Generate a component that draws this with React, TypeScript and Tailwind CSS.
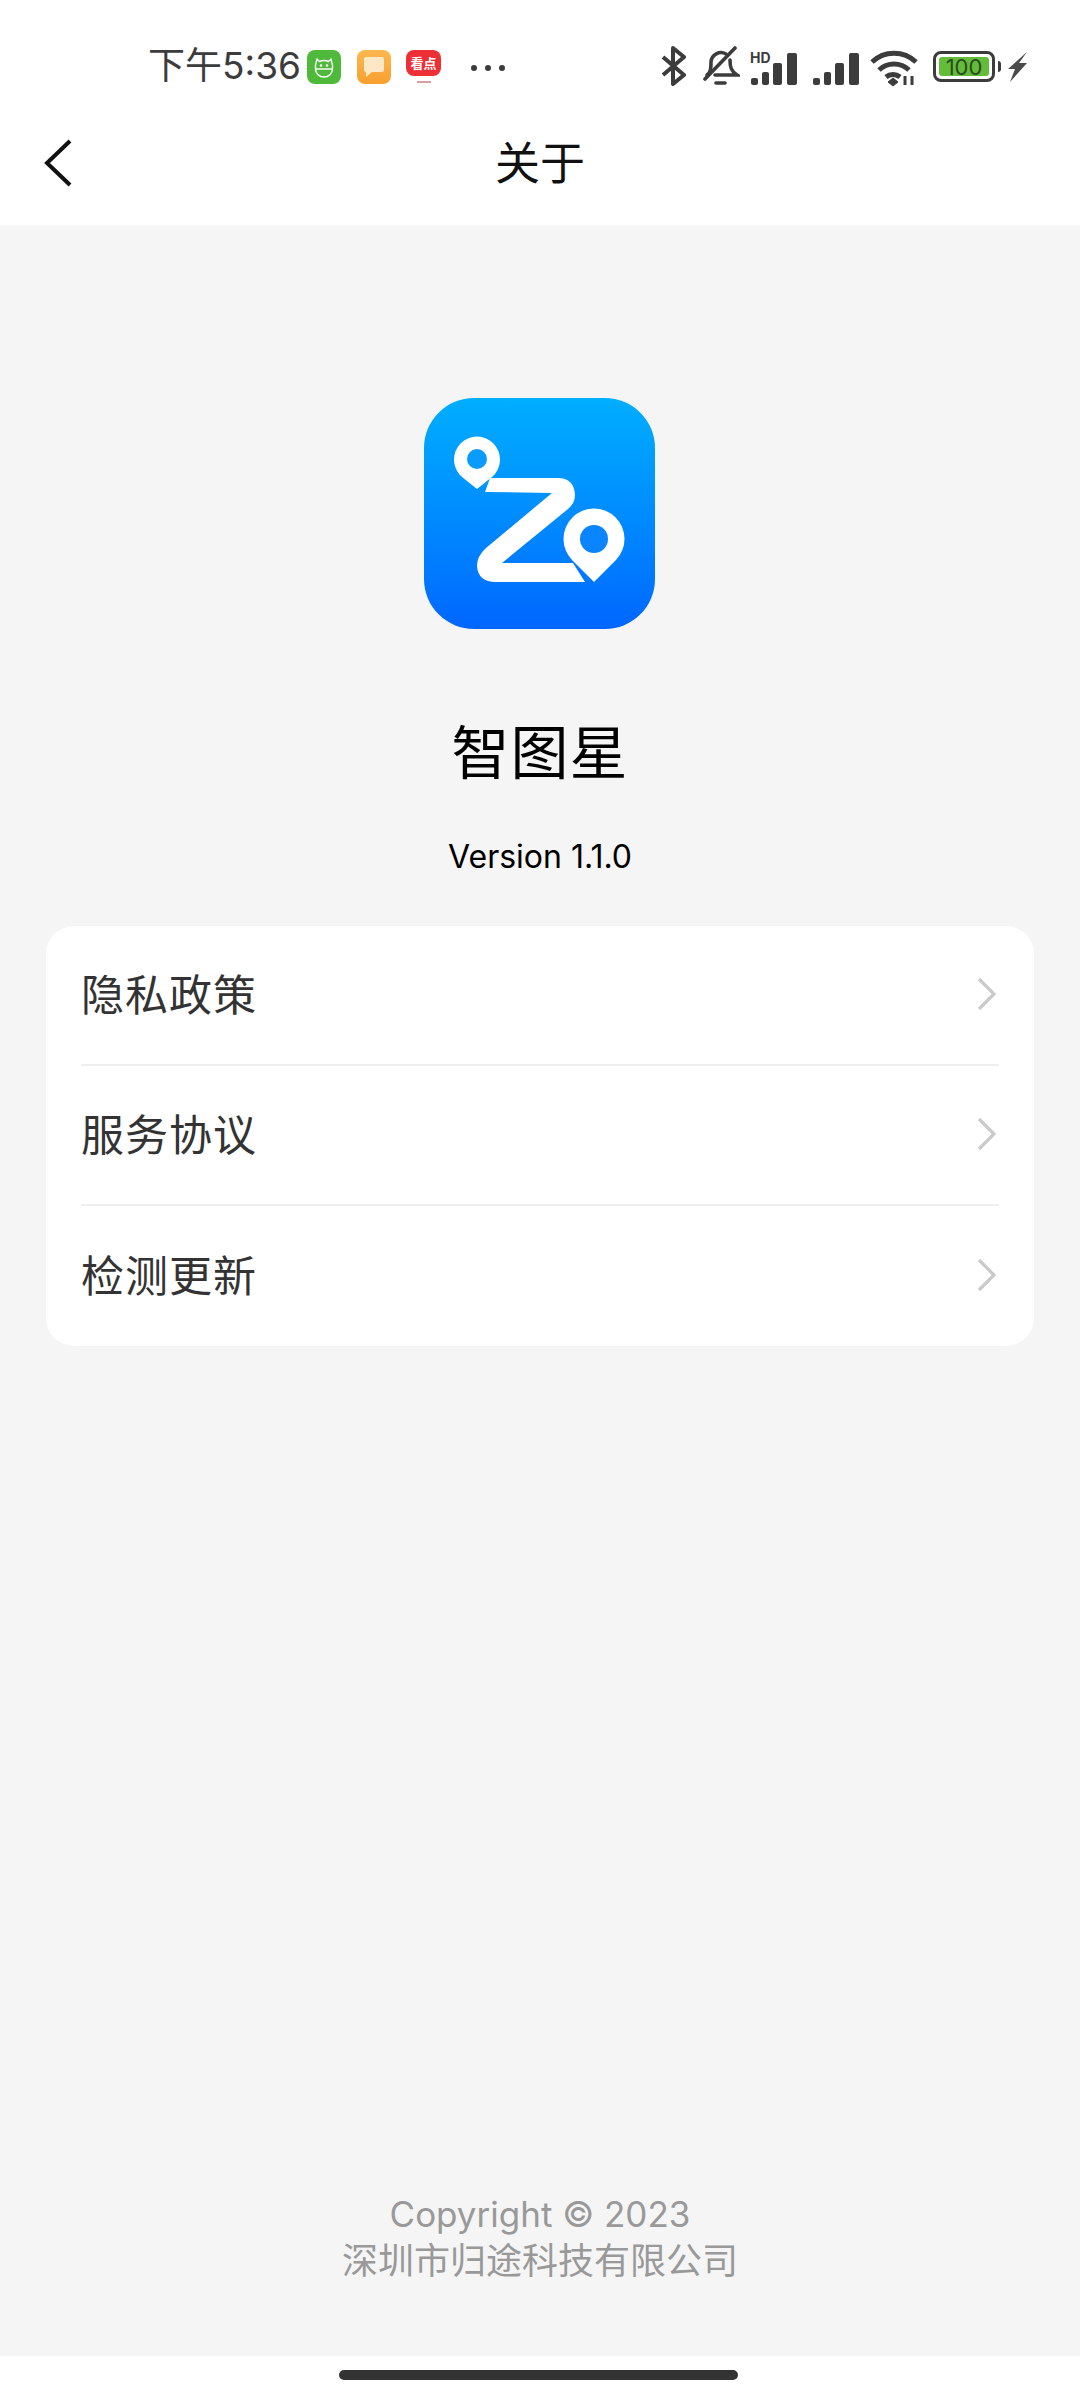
const FONT = "font-['Inter','Noto_Sans_CJK_SC',sans-serif]";

const rows = ["隐私政策", "服务协议", "检测更新"];

const Signal = ({ hd }: { hd?: boolean }) => (
    <svg width="50" height="36" viewBox="0 0 50 36" className="shrink-0">
        {hd && (
            <text x="0" y="13" fontSize="14" fontWeight="700" fill="#3c3c3c" fontFamily="Inter, sans-serif">
                HD
            </text>
        )}
        <rect x="1" y="28" width="7" height="7" rx="2" fill="#3c3c3c" />
        <rect x="12" y="22" width="7" height="13" rx="2" fill="#3c3c3c" />
        <rect x="23" y="13" width="9" height="22" rx="2" fill="#3c3c3c" />
        <rect x="37" y="3" width="10" height="32" rx="2" fill="#3c3c3c" />
    </svg>
);

const StatusBar = () => (
    <div className="flex h-[113px] items-start pl-[148px] pt-[46px]">
        <span className="w-[159px] text-[37px] leading-[40px] text-[#3c3c3c]">下午5:36</span>
        <div className="mt-[4px] flex h-[34px] w-[34px] items-center justify-center rounded-[8px] bg-[#4fb93b]">
            <svg width="24" height="24" viewBox="0 0 24 24" fill="none" stroke="#fff" strokeWidth="1.4">
                <path d="M5 4l2.5 2.5a11 11 0 0 1 9 0L19 4l1.5 6v4a8.5 8 0 0 1-17 0v-4z" />
                <path d="M3.5 14h17" />
                <circle cx="9" cy="10.5" r="0.6" />
                <circle cx="15" cy="10.5" r="0.6" />
            </svg>
        </div>
        <div className="ml-[16px] mt-[4px] flex h-[34px] w-[34px] items-center justify-center rounded-[8px] bg-gradient-to-b from-[#fbb84f] to-[#f8a02e]">
            <svg width="22" height="22" viewBox="0 0 22 22">
                <path d="M1 3a2 2 0 0 1 2-2h16a2 2 0 0 1 2 2v11a2 2 0 0 1-2 2H9l-6 5v-5a2 2 0 0 1-2-2z" fill="#fde7c4" />
            </svg>
        </div>
        <div className="ml-[15px] mt-[4px] flex h-[34px] w-[35px] flex-col items-center">
            <div className="flex h-[26px] w-[35px] items-center justify-center rounded-[8px] bg-[#ee2f36] text-[13px] font-bold leading-none text-white">
                看点
            </div>
            <div className="mt-[5px] h-[2px] w-[14px] bg-[#d8a0a0]" />
        </div>
        <div className="ml-[30px] mt-[19px] flex w-[34px] justify-between">
            <span className="h-[6px] w-[6px] rounded-full bg-[#3c3c3c]" />
            <span className="h-[6px] w-[6px] rounded-full bg-[#3c3c3c]" />
            <span className="h-[6px] w-[6px] rounded-full bg-[#3c3c3c]" />
        </div>

        <svg width="26" height="40" viewBox="0 0 26 40" fill="none" stroke="#3c3c3c" strokeWidth="4" className="ml-[156px]">
            <path d="M2 11l21 18-11 9V2l11 9L2 29" strokeLinejoin="round" />
        </svg>
        <svg width="38" height="40" viewBox="0 0 38 40" fill="none" stroke="#3c3c3c" strokeWidth="3.6" strokeLinecap="round" className="ml-[15px]">
            <path d="M5 29c4-3 4-7 4-13a10 10 0 0 1 15-8" />
            <path d="M28 14c0 7 1 11 7 15H13" />
            <path d="M3 33L33 2" />
            <path d="M14 37h9" />
        </svg>
        <div className="ml-[10px] mt-[4px] flex">
            <Signal hd />
        </div>
        <div className="ml-[12px] mt-[4px] flex">
            <Signal />
        </div>
        <svg width="48" height="38" viewBox="0 0 48 38" fill="none" stroke="#3c3c3c" strokeWidth="5" className="ml-[8px] mt-[3px]">
            <path d="M2 13a32 32 0 0 1 44 0" />
            <path d="M9 21a22 22 0 0 1 30 0" />
            <path d="M16 28a11 11 0 0 1 14 0" />
            <path d="M18 33l5-4 5 4-5 4z" fill="#3c3c3c" strokeWidth="1" />
            <path d="M35 27v9M42 27v9" strokeWidth="3" />
        </svg>
        <div className="ml-[15px] mt-[5px] flex h-[31px] w-[62px] items-center rounded-[8px] border-[3px] border-[#3c3c3c] p-[3px]">
            <div className="flex h-full w-full items-center justify-center rounded-[3px] bg-[#63bd3a] text-[22px] leading-none text-[#2c4a20]">
                100
            </div>
        </div>
        <div className="ml-[3px] mt-[15px] h-[11px] w-[3px] rounded-r-sm bg-[#3c3c3c]" />
        <svg width="20" height="30" viewBox="0 0 20 30" className="ml-[6px] mt-[6px]">
            <path d="M20 0L1 17h7L3 30l17-19h-8z" fill="#4a4a4a" />
        </svg>
    </div>
);

const Logo = () => (
    <div className="ml-[-1px] h-[231px] w-[231px] rounded-[50px] bg-gradient-to-b from-[#00aeff] to-[#0066ff]">
        <svg width="231" height="231" viewBox="0 0 231 231">
            <path
                d="M61 94L66 80H134Q150 80 151 97Q151 105 144 111L78 165H149L161 184H72Q54 184 53 168Q53 158 62 150L128 95Z"
                fill="#fff"
            />
            <path d="M53 91L38 79A23 23 0 1 1 68 79Z" fill="#fff" />
            <circle cx="53" cy="61" r="10" fill="#0a9bff" />
            <path d="M170 184L148 162A30.5 30.5 0 1 1 192 162Z" fill="#fff" />
            <circle cx="170" cy="141" r="14" fill="#0a85ff" />
        </svg>
    </div>
);

const App = () => {
    return (
        <div className={`flex h-[2400px] w-[1080px] flex-col bg-white ${FONT}`}>
            <StatusBar />
            <div className="relative flex h-[112px] items-start justify-center pt-[28px]">
                <svg width="30" height="50" viewBox="0 0 30 50" fill="none" stroke="#111" strokeWidth="4" className="absolute left-[43px] top-[25px]">
                    <path d="M27 3L4 25l23 22" />
                </svg>
                <span className="text-[45px] leading-none text-[#111]">关于</span>
            </div>

            <main className="flex flex-1 flex-col items-center bg-[#f5f5f5] pt-[173px]">
                <Logo />
                <h1 className="mt-[92px] text-[58px] leading-[64px] tracking-[1px] text-black">智图星</h1>
                <p className="mt-[52px] text-[32px] leading-[40px] text-black">Version 1.1.0</p>

                <div className="mt-[49px] w-[988px] rounded-[28px] bg-white px-[35px]">
                    {rows.map((row, index) => (
                        <div
                            key={row}
                            className={`flex h-[140px] items-center justify-between ${index < rows.length - 1 ? "border-b-2 border-[#eeeeee]" : ""}`}
                        >
                            <span className="text-[43px] leading-none tracking-[1px] text-[#333]">{row}</span>
                            <svg width="22" height="36" viewBox="0 0 22 36" fill="none" stroke="#cacaca" strokeWidth="3.2" className="mr-[1px] mt-[-2px]">
                                <path d="M3 3l15 15L3 33" />
                            </svg>
                        </div>
                    ))}
                </div>

                <div className="mt-auto pb-[71px] text-center text-[36px] leading-[47px] text-[#999]">
                    <p className="text-[35px]">Copyright © 2023</p>
                    <p>深圳市归途科技有限公司</p>
                </div>
            </main>

            <div className="flex h-[44px] justify-center pt-[14px]">
                <div className="ml-[-4px] h-[10px] w-[399px] rounded-full bg-[#333]" />
            </div>
        </div>
    );
};

export default App;
